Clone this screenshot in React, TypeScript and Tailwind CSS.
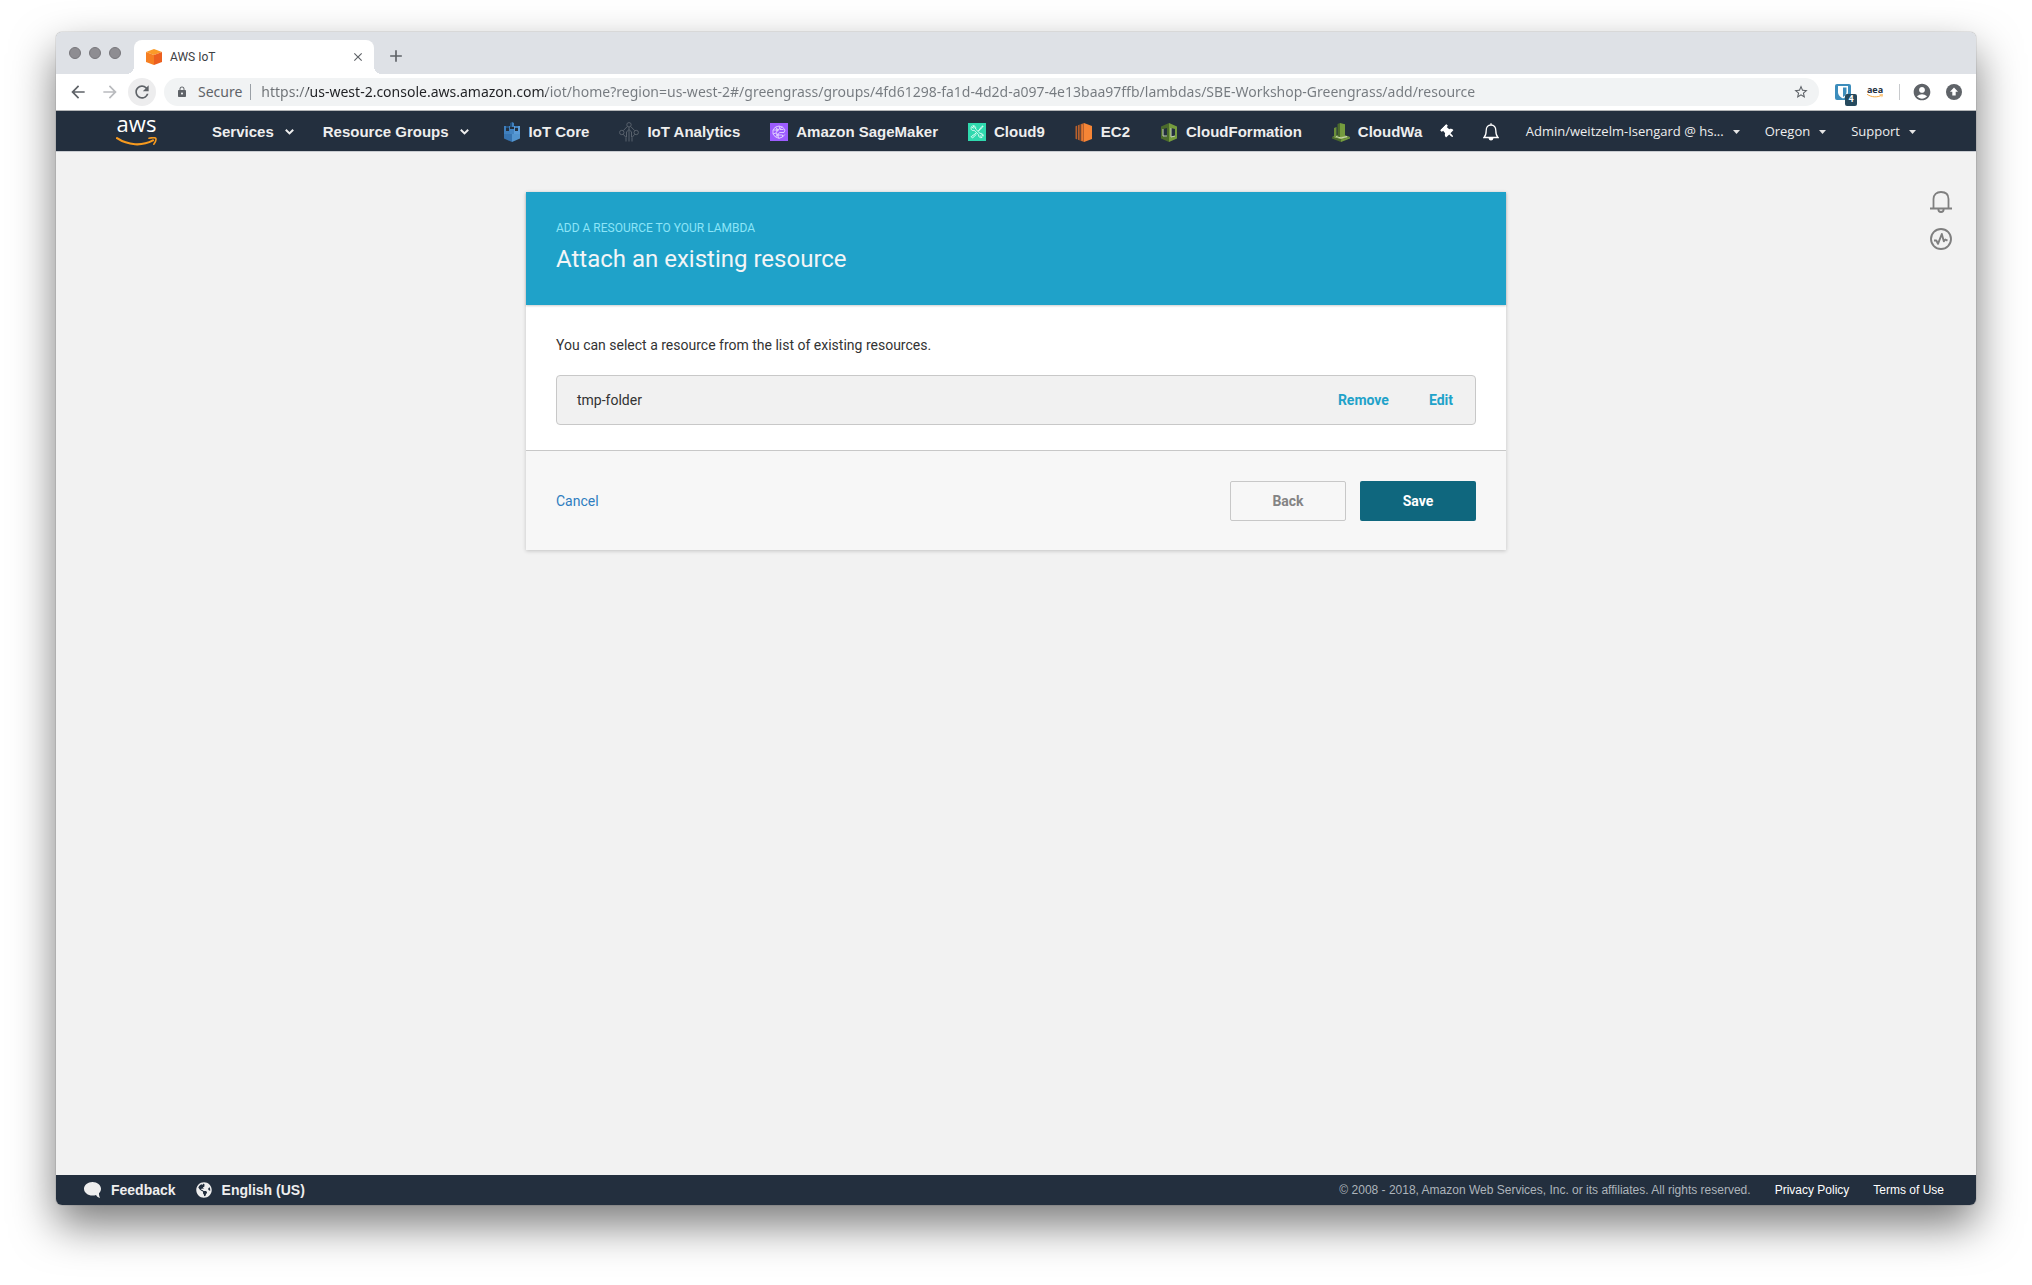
import type { ReactNode } from "react";
import { MdAccountCircle, MdAdd, MdArrowBack, MdArrowForward, MdClose, MdLock, MdRefresh, MdStarBorder } from "react-icons/md";
import { FaGlobeAmericas, FaThumbtack } from "react-icons/fa";

const URL_TEXT =
  "https://us-west-2.console.aws.amazon.com/iot/home?region=us-west-2#/greengrass/groups/4fd61298-fa1d-4d2d-a097-4e13baa97ffb/lambdas/SBE-Workshop-Greengrass/add/resource";

function CubeIcon() {
  return (
    <svg className="size-4 shrink-0" viewBox="0 0 16 16" aria-hidden="true">
      <path d="M8 0 16 3 8 6 0 3Z" fill="#fb9a28" />
      <path d="M0 3 8 6V16L0 13Z" fill="#f67f22" />
      <path d="M16 3 8 6V16L16 13Z" fill="#ec5f1f" />
    </svg>
  );
}

function Smile({ className }: { className: string }) {
  return (
    <svg className={className} viewBox="0 0 41 10" fill="none" aria-hidden="true">
      <path d="M1 1.2C12 8.5 26 9.3 37 3.4" stroke="#f79a1e" strokeWidth="2.2" strokeLinecap="round" />
      <path d="M33 1.3C35.500.6 38.600.5 39.700 1.200 40.300 2.500 39.400 5.300 37.800 7.200" stroke="#f79a1e" strokeWidth="1.6" strokeLinecap="round" strokeLinejoin="round" />
    </svg>
  );
}

function IotCoreIcon() {
  return (
    <svg className="h-5 w-[18px] shrink-0" viewBox="0 0 18 20" aria-hidden="true">
      <path d="M1 9 9 11V20L1 16.500Z" fill="#3673b0" />
      <path d="M9 11 17 9V16.500L9 20Z" fill="#5294cf" />
      <path d="M1 4H3V9H6V4H7V12H1Z" fill="#3f7fbd" />
      <path d="M17 4H15V9H12V4H11V12H17Z" fill="#5a9bd8" />
      <path d="M3 4H6V6H3ZM7 1 9 0V5H7Z" fill="#24527f" />
      <path d="M9 0 11 1V5H9ZM12 4H15V6H12Z" fill="#3f7fbd" />
      <path d="M7 7H11V12H7Z" fill="#4384c2" />
    </svg>
  );
}

function IotAnalyticsIcon() {
  return (
    <svg className="h-5 w-[20px] shrink-0" viewBox="0 0 20 20" fill="none" stroke="#59626d" aria-hidden="true">
      <circle cx="10" cy="2.800" r="2.200" />
      <circle cx="2.800" cy="10.500" r="2.200" />
      <circle cx="17.200" cy="10.500" r="2.200" />
      <path d="M8.300 4.500 4.200 8.700M11.700 4.500 15.800 8.700M4.300 12.300 7 15.500V19.500M15.700 12.300 13 15.500V19.500M10 5V19.500M7.500 15V10L10 7.500 12.500 10V15" />
    </svg>
  );
}

function SageMakerIcon() {
  return (
    <svg className="size-[18px] shrink-0" viewBox="0 0 18 18" fill="none" stroke="#e3d4ff" strokeWidth=".9" aria-hidden="true">
      <rect width="18" height="18" fill="#9d5cff" stroke="none" />
      <path d="M9 3 5.500 4 3 7 3 11 5.500 14 9 15.300 12.500 14 14.800 11.500M9 3 12.500 4 15 7 14 9.500H9.500M5.500 4 7.500 7 3 7M7.500 7 12.500 4M7.500 7 6 10 3 11M6 10 7.500 12 5.500 14M7.500 12H12.500L12.500 14M9 3 10 6.500H13.500M9.500 9.500 7.500 12 9 15.300" />
      <circle cx="7.500" cy="7" r=".9" />
      <circle cx="7.500" cy="12" r=".9" />
    </svg>
  );
}

function Cloud9Icon() {
  return (
    <svg className="size-[18px] shrink-0" viewBox="0 0 18 18" fill="none" stroke="#d9fff4" strokeWidth="1" aria-hidden="true">
      <rect width="18" height="18" fill="#2fd9ae" stroke="none" />
      <path d="M3.300 6.500C2.800 4.900 3.300 4 3.700 3.500L5.300 5.300 6.300 4.300 4.700 2.800C6.600 2.300 8.200 3.900 7.600 6L12 10.400C14 9.900 15.600 11.500 15.100 13.300L13.500 11.800 12.400 12.900 14 14.500C12.100 15.200 10.200 13.800 10.700 11.800L6.200 7.400C4.900 7.800 3.800 7.500 3.300 6.500Z" />
      <path d="M15 3 14 3.300 10.300 8M15 3 14.700 4 11 7.500M8 10.200 3.200 13.700 4.500 15 8.500 11.200" />
    </svg>
  );
}

function Ec2Icon() {
  return (
    <svg className="h-[19px] w-[18px] shrink-0" viewBox="0 0 18 19" aria-hidden="true">
      <path d="M9 0 17 3V16L9 19Z" fill="#f58536" />
      <path d="M5.500 1.200 9 0V19L5.500 17.800ZM3 2.300 4.700 1.600V17.400L3 16.700ZM.500 3.300 2.200 2.600V16.400L.500 15.700Z" fill="#b8602c" />
      <path d="M6.700 1.400H7.700V17.800H6.700Z" fill="#f58536" />
    </svg>
  );
}

function CloudFormationIcon() {
  return (
    <svg className="h-[19px] w-[18px] shrink-0" viewBox="0 0 18 19" aria-hidden="true">
      <path fillRule="evenodd" d="M9 0 1 3.500V15.500L9 19ZM3 6 7 5V14L3 13Z" fill="#4b6b2c" />
      <path fillRule="evenodd" d="M9 0 17 3.500V15.500L9 19ZM11 5 15 6V13L11 14Z" fill="#759c3e" />
      <path d="M3 6V13H7M15 13 11 14V5" fill="none" stroke="#c9d5b6" />
    </svg>
  );
}

function CloudWatchIcon() {
  return (
    <svg className="h-[19px] w-[18px] shrink-0" viewBox="0 0 18 19" aria-hidden="true">
      <path d="M0 14 9 11 18 14 9 16.500Z" fill="#8db04f" />
      <path d="M5.500 1 8 0V14L5.500 14.500Z" fill="#4b6b2c" />
      <path d="M8 0 13 1.200V12.500L8 14Z" fill="#759c3e" />
      <path d="M2 5 4.500 4V14L2 13.500Z" fill="#6b8f3a" />
      <path d="M0 14 9 16.500V19L0 15.500Z" fill="#4b6b2c" />
      <path d="M18 14 9 16.500V19L18 15.500Z" fill="#759c3e" />
      <path d="M4 13.500 9 15 15 13.500" fill="none" stroke="#c9d5b6" />
    </svg>
  );
}

function Chevron() {
  return (
    <svg className="h-[6px] w-[9px]" viewBox="0 0 9 6" fill="none" stroke="#eee" strokeWidth="2" aria-hidden="true">
      <path d="M.8 .8 4.500 4.400 8.200 .8" />
    </svg>
  );
}

function Caret() {
  return (
    <svg className="h-1 w-[7px]" viewBox="0 0 7 4" fill="#e6e6e6" aria-hidden="true">
      <path d="M0 0H7L3.500 4Z" />
    </svg>
  );
}

const shortcuts: { label: string; icon: ReactNode }[] = [
  { label: "IoT Core", icon: <IotCoreIcon /> },
  { label: "IoT Analytics", icon: <IotAnalyticsIcon /> },
  { label: "Amazon SageMaker", icon: <SageMakerIcon /> },
  { label: "Cloud9", icon: <Cloud9Icon /> },
  { label: "EC2", icon: <Ec2Icon /> },
  { label: "CloudFormation", icon: <CloudFormationIcon /> },
  { label: "CloudWa", icon: <CloudWatchIcon /> },
];

function TabStrip() {
  return (
    <div className="flex h-[42px] items-end bg-[#dee1e6] pl-[13px]">
      <div className="mr-[13px] flex h-[42px] items-center gap-2">
        {["Close window", "Minimize window", "Zoom window"].map((name) => (
          <button key={name} aria-label={name} className="size-3 rounded-full border border-[#77767b] bg-[#8e8d92]" />
        ))}
      </div>
      <div className="relative flex h-[34px] w-60 items-center rounded-t-lg bg-white pr-2 pl-3 before:absolute before:bottom-0 before:-left-2 before:size-2 before:bg-[radial-gradient(circle_at_0_0,transparent_8px,#fff_8px)] after:absolute after:-right-2 after:bottom-0 after:size-2 after:bg-[radial-gradient(circle_at_100%_0,transparent_8px,#fff_8px)]">
        <CubeIcon />
        <span className="ml-2 flex-1 text-xs text-[#3c4043]">AWS IoT</span>
        <button aria-label="Close tab" className="flex size-4 items-center justify-center text-[#5f6368]">
          <MdClose className="size-[14px]" />
        </button>
      </div>
      <button aria-label="New tab" className="mb-2 ml-3 text-[#5f6368]">
        <MdAdd className="size-5" />
      </button>
    </div>
  );
}

function Toolbar() {
  return (
    <div className="flex h-[37px] items-center border-b border-[#b3b5b7] bg-white pr-[14px] pl-3 text-[#5f6368]">
      <button aria-label="Back">
        <MdArrowBack className="size-5" />
      </button>
      <button aria-label="Forward" className="ml-3 text-[#b9bbbe]">
        <MdArrowForward className="size-5" />
      </button>
      <button aria-label="Reload" className="ml-2 flex size-7 items-center justify-center rounded-full bg-[#ededee]">
        <MdRefresh className="size-5" />
      </button>
      <div className="ml-2 flex h-7 flex-1 items-center rounded-full bg-[#f1f3f4] pr-[10px] pl-3 font-['Noto_Sans',sans-serif] text-sm">
        <MdLock className="size-3" />
        <span className="ml-[10px]">Secure</span>
        <span className="mr-[10px] ml-2 h-4 w-px bg-[#9aa0a6]" />
        <input
          aria-label="Address"
          defaultValue={URL_TEXT}
          spellCheck={false}
          className="min-w-0 flex-1 bg-[linear-gradient(to_right,#6c7074_47px,#202124_47px,#202124_285px,#757a7f_285px)] bg-clip-text text-transparent outline-none"
        />
        <button aria-label="Bookmark this page">
          <MdStarBorder className="size-4" />
        </button>
      </div>
      <button aria-label="Bitwarden" className="relative ml-4">
        <svg className="size-4" viewBox="0 0 16 16" aria-hidden="true">
          <rect width="16" height="16" rx="2" fill="#3c8dbc" />
          <path d="M3 2H13V8C13 11.500 10.500 13.300 8 14.600 5.500 13.300 3 11.500 3 8Z" fill="#fff" />
          <path d="M8 3.500H11.500V8C11.500 10.500 9.700 12 8 13Z" fill="#3c8dbc" />
        </svg>
        <span className="absolute top-[10px] left-[10px] flex size-3 items-center justify-center rounded-xs bg-[#264a5e] text-[9px] font-bold text-white">4</span>
      </button>
      <button aria-label="Amazon extension" className="ml-4 flex w-4 flex-col items-center text-[#232f3e]">
        <span className="font-['Open_Sans',sans-serif] text-[9px] leading-2 font-bold">aea</span>
        <Smile className="h-1 w-4" />
      </button>
      <span className="ml-4 h-4 w-px bg-[#c8cacd]" />
      <button aria-label="Profile" className="ml-3">
        <MdAccountCircle className="size-5" />
      </button>
      <button aria-label="Update available" className="ml-[14px]">
        <svg className="size-4" viewBox="0 0 16 16" aria-hidden="true">
          <circle cx="8" cy="8" r="8" fill="currentColor" />
          <path d="M8 3.500 12 7.800H9.700V11.500H6.300V7.800H4Z" fill="#fff" />
        </svg>
      </button>
    </div>
  );
}

function ConsoleNav() {
  return (
    <nav className="flex h-10 items-center bg-[#232f3e] px-[60px] pt-0.5 font-['Liberation_Sans',Arial,sans-serif] text-[15px] font-bold whitespace-nowrap text-[#eee]">
      <a href="#home" aria-label="AWS home" className="flex w-[41px] flex-col items-center">
        <span className="font-['Open_Sans',sans-serif] text-[22px] leading-3 font-medium text-white">aws</span>
        <Smile className="mt-2 h-[10px] w-[41px]" />
      </a>
      <button className="ml-[55px] flex items-center gap-[11px]">
        Services <Chevron />
      </button>
      <button className="ml-[29px] flex items-center gap-[11px]">
        Resource Groups <Chevron />
      </button>
      <div className="ml-[34px] flex min-w-0 flex-1 items-center gap-[30px] overflow-hidden">
        {shortcuts.map((s) => (
          <a key={s.label} href={"#" + s.label} className="flex shrink-0 items-center gap-2">
            {s.icon}
            {s.label}
          </a>
        ))}
      </div>
      <button aria-label="Pin shortcuts" className="ml-3">
        <FaThumbtack className="size-[14px] -rotate-45 text-white" />
      </button>
      <button aria-label="Notifications" className="ml-7">
        <svg className="h-[18px] w-4" viewBox="0 0 16 18" fill="none" stroke="#fff" strokeWidth="1.300" aria-hidden="true">
          <path d="M1 14.500C3 12.500 3.200 11 3.200 7.500 3.200 4 5 2 8 2S12.800 4 12.800 7.500C12.800 11 13 12.500 15 14.500ZM8 .3V2" />
          <path d="M6.300 15.500C6.500 17.400 9.500 17.400 9.700 15.500Z" fill="#fff" />
        </svg>
      </button>
      <div className="ml-[27px] flex gap-[25px] font-['Open_Sans',sans-serif] text-[13px] font-medium">
        <button className="flex items-center gap-[9px]">Admin/weitzelm-Isengard @ hs... <Caret /></button>
        <button className="flex items-center gap-[9px]">Oregon <Caret /></button>
        <button className="flex items-center gap-[9px]">Support <Caret /></button>
      </div>
    </nav>
  );
}

function ResourceCard() {
  return (
    <section className="w-full max-w-[980px] bg-white shadow-[0_1px_4px_rgba(0,0,0,0.2)]">
      <header className="bg-[#1fa2c9] px-[30px] pt-7 pb-[31px] shadow-[0_1px_2px_rgba(0,0,0,0.2)]">
        <p className="text-xs leading-4 text-[#8ce5f8]">ADD A RESOURCE TO YOUR LAMBDA</p>
        <h1 className="mt-2 text-2xl leading-[30px] text-[#f2f5f7]">Attach an existing resource</h1>
      </header>
      <div className="px-[30px] pt-[30px] pb-[25px] text-sm text-[#333]">
        <p>You can select a resource from the list of existing resources.</p>
        <div className="mt-5 flex h-[50px] items-center rounded border border-[#c8c8c8] bg-[#f1f1f1] pr-[22px] pl-5">
          <span className="flex-1">tmp-folder</span>
          <button className="font-bold text-[#1fa2c9]">Remove</button>
          <button className="ml-10 font-bold text-[#1fa2c9]">Edit</button>
        </div>
      </div>
      <footer className="flex items-center border-t border-[#c8c8c8] bg-[#f7f7f7] px-[30px] pt-[30px] pb-[29px] text-sm">
        <button className="text-[#2e7dc0]">Cancel</button>
        <button className="ml-auto h-10 w-[116px] rounded-xs border border-[#c8c8c8] font-bold text-[#848484]">Back</button>
        <button className="ml-[14px] h-10 w-[116px] rounded-xs bg-[#0f677e] font-bold text-white">Save</button>
      </footer>
    </section>
  );
}

function SideTools() {
  return (
    <aside className="absolute top-[39px] right-6 flex flex-col gap-[15px] text-[#7f7f7f]">
      <button aria-label="Alerts">
        <svg className="size-[22px]" viewBox="0 0 22 22" fill="none" stroke="currentColor" strokeWidth="1.800" aria-hidden="true">
          <path d="M0 17.500H22M3.500 17.500V8C3.500 3.500 6.500 1 11 1S18.500 3.500 18.500 8V17.500M8.300 18C8.300 22 13.700 22 13.700 18" />
        </svg>
      </button>
      <button aria-label="Activity">
        <svg className="size-[22px]" viewBox="0 0 22 22" fill="none" stroke="currentColor" strokeWidth="1.900" aria-hidden="true">
          <circle cx="11" cy="11" r="10" />
          <path d="M4 12.500H6.300L8 15.800 11.800 6 13.800 13.300 15.300 11.500 17.500 12.700" strokeLinejoin="round" />
        </svg>
      </button>
    </aside>
  );
}

function ConsoleFooter() {
  return (
    <footer className="flex h-[30px] items-center bg-[#232f3e] pr-8 pl-7 font-['Liberation_Sans',Arial,sans-serif] text-sm font-bold text-[#eee]">
      <a href="#feedback" className="flex items-center gap-[10px]">
        <svg className="h-4 w-[17px]" viewBox="0 0 17 16" fill="currentColor" aria-hidden="true">
          <path d="M8.500 0C3.800 0 0 3 0 6.800S3.800 13.600 8.500 13.600C9.800 13.600 11 13.400 12 13 12.800 14.500 14.300 15.600 16.200 16 15.300 14.700 14.900 13 15 11.200 16.300 10 17 8.500 17 6.800 17 3 13.200 0 8.500 0Z" />
        </svg>
        Feedback
      </a>
      <a href="#language" className="ml-5 flex items-center gap-[10px]">
        <FaGlobeAmericas className="size-4" />
        English (US)
      </a>
      <div className="ml-auto flex gap-6 text-xs font-normal">
        <span className="text-[#adb4bb]">© 2008 - 2018, Amazon Web Services, Inc. or its affiliates. All rights reserved.</span>
        <a href="#privacy" className="text-white">Privacy Policy</a>
        <a href="#terms" className="text-white">Terms of Use</a>
      </div>
    </footer>
  );
}

export default function App() {
  return (
    <div className="flex min-h-screen flex-col bg-white px-14 pt-8 pb-20 font-[Roboto,sans-serif]">
      <div className="flex flex-1 flex-col overflow-hidden rounded-md shadow-[0_0_1px_rgba(0,0,0,0.7),0_20px_44px_rgba(0,0,0,0.52)]">
        <TabStrip />
        <Toolbar />
        <ConsoleNav />
        <main className="relative flex flex-1 items-start justify-center border-t border-[#c9ccd1] bg-[#f2f2f2] px-20 py-10">
          <ResourceCard />
          <SideTools />
        </main>
        <ConsoleFooter />
      </div>
    </div>
  );
}
